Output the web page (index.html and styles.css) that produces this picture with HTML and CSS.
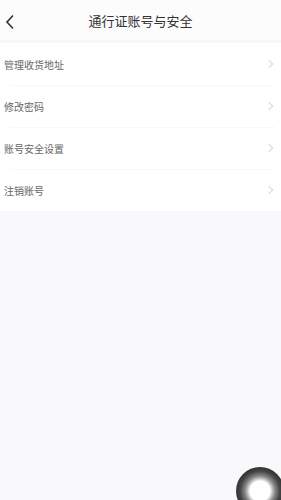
FILE: index.html
```html
<!doctype html>
<html lang="zh-CN">
  <head>
    <meta charset="UTF-8" />
    <meta name="viewport" content="width=device-width, initial-scale=1.0" />
    <title>通行证账号与安全</title>
    <link rel="stylesheet" href="styles.css">
  </head>
  <body>
    <div class="header">
      <span class="back">
        <svg width="10" height="16" viewBox="0 0 10 16">
          <path d="M8 1.5 L2 8 L8 14.5" fill="none" stroke="#333" stroke-width="1.6" />
        </svg>
      </span>
      <div class="title">通行证账号与安全</div>
    </div>

    <div class="menu-list">
      <div class="menu-item">
        <span class="menu-text">管理收货地址</span>
        <span class="arrow"></span>
      </div>
      <div class="menu-item">
        <span class="menu-text">修改密码</span>
        <span class="arrow"></span>
      </div>
      <div class="menu-item">
        <span class="menu-text">账号安全设置</span>
        <span class="arrow"></span>
      </div>
      <div class="menu-item">
        <span class="menu-text">注销账号</span>
        <span class="arrow"></span>
      </div>
    </div>

    <div class="float-button"></div>
  </body>
</html>
```

FILE: styles.css
```css
body {
  margin: 0;
  height: 100vh;
  background-color: #f9f9fb;
  font-family: "Noto Sans CJK SC", "Noto Sans", sans-serif;
  overflow: hidden;
}

.header {
  height: 40px;
  display: flex;
  align-items: center;
  justify-content: center;
  position: relative;
  background-color: #fcfcfd;
  border-bottom: 3px solid #f7f7f9;
}

.back {
  position: absolute;
  left: 5px;
  top: 11px;
}

.title {
  font-size: 13px;
  color: #333;
}

.menu-list {
  background-color: #fff;
}

.menu-item {
  height: 42px;
  display: flex;
  align-items: center;
  justify-content: space-between;
  padding: 0 9px 0 4px;
  position: relative;
}

.menu-item + .menu-item::before {
  content: "";
  position: absolute;
  top: 0;
  left: 10px;
  right: 6px;
  border-top: 1px solid #f8f8f9;
}

.menu-text {
  font-size: 10px;
  color: #666;
}

.arrow {
  width: 5px;
  height: 5px;
  border-top: 1px solid #d8d8d8;
  border-right: 1px solid #d8d8d8;
  transform: rotate(45deg);
}

.float-button {
  position: fixed;
  left: 236px;
  top: 467px;
  width: 48px;
  height: 48px;
  border-radius: 50%;
  background: radial-gradient(circle, #fff 0, #fff 10px, #ccc 12px, #888 15px, #444 20px, #333 24px);
}
```
